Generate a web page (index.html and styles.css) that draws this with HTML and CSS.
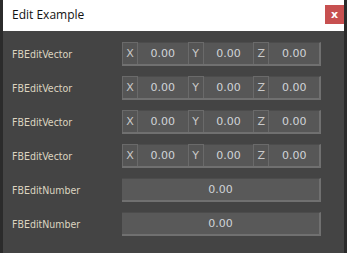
FILE: index.html
```html
<!DOCTYPE html>
<html lang="en">
<head>
  <meta charset="UTF-8" />
  <title>Edit Example</title>
  <link rel="stylesheet" href="styles.css">
</head>
<body>
  <div class="window">
    <div class="titlebar">
      <span class="title">Edit Example</span>
      <button class="close">x</button>
    </div>

    <div class="content">
      <div class="row">
        <span class="label">FBEditVector</span>
        <div class="vector">
          <span class="axis">X</span><span class="value">0.00</span>
          <span class="axis">Y</span><span class="value">0.00</span>
          <span class="axis">Z</span><span class="value">0.00</span>
        </div>
      </div>
      <div class="row">
        <span class="label">FBEditVector</span>
        <div class="vector">
          <span class="axis">X</span><span class="value">0.00</span>
          <span class="axis">Y</span><span class="value">0.00</span>
          <span class="axis">Z</span><span class="value">0.00</span>
        </div>
      </div>
      <div class="row">
        <span class="label">FBEditVector</span>
        <div class="vector">
          <span class="axis">X</span><span class="value">0.00</span>
          <span class="axis">Y</span><span class="value">0.00</span>
          <span class="axis">Z</span><span class="value">0.00</span>
        </div>
      </div>
      <div class="row">
        <span class="label">FBEditVector</span>
        <div class="vector">
          <span class="axis">X</span><span class="value">0.00</span>
          <span class="axis">Y</span><span class="value">0.00</span>
          <span class="axis">Z</span><span class="value">0.00</span>
        </div>
      </div>
      <div class="row">
        <span class="label">FBEditNumber</span>
        <div class="number">0.00</div>
      </div>
      <div class="row">
        <span class="label">FBEditNumber</span>
        <div class="number">0.00</div>
      </div>
    </div>
  </div>
</body>
</html>
```

FILE: styles.css
```css
* {
  margin: 0; padding: 0; box-sizing: border-box;
}
body {
  background: #2b2b2b;
  font-family: 'DejaVu Sans', sans-serif;
  width: 347px;
  height: 253px;
  overflow: hidden;
}
.window {
  margin: 0 3px;
  height: 253px;
  background: #444;
}
.titlebar {
  height: 31px;
  background: #fff;
  display: flex;
  align-items: center;
  justify-content: space-between;
  padding: 0 0 0 9px;
}
.title {
  font-family: 'Open Sans', sans-serif;
  font-size: 12px;
  color: #111;
  margin-top: -2px;
}
.close {
  width: 19px;
  height: 19px;
  border: none;
  background: #c75050;
  color: #fff;
  font-family: 'DejaVu Sans', sans-serif;
  font-weight: bold;
  font-size: 11px;
  line-height: 17px;
  margin-top: -3px;
}
.content {
  padding: 11px 0 0 9px;
  display: flex;
  flex-direction: column;
  gap: 10px;
}
.row {
  display: flex;
  align-items: center;
  height: 24px;
}
.label {
  width: 110px;
  font-size: 10.5px;
  color: #dcd5c0;
  font-family: 'DejaVu Sans Condensed', 'DejaVu Sans', sans-serif;
}
.vector, .number {
  width: 199px;
  height: 24px;
  display: flex;
  background: #575757;
  border-right: 2px solid #707070;
  border-bottom: 2px solid #707070;
  border-top: 1px solid #4c4c4c;
  font-size: 11px;
  color: #d0d4d8;
}
.axis {
  width: 16px;
  background: #555;
  border: 1px solid #6a6a6a;
  border-bottom: none;
  display: flex;
  align-items: center;
  justify-content: center;
  color: #c9c9c9;
  margin-top: -1px;
}
.value {
  flex: 1;
  display: flex;
  align-items: center;
  justify-content: center;
}
.number {
  align-items: center;
  justify-content: center;
  background: #595959;
}
```
